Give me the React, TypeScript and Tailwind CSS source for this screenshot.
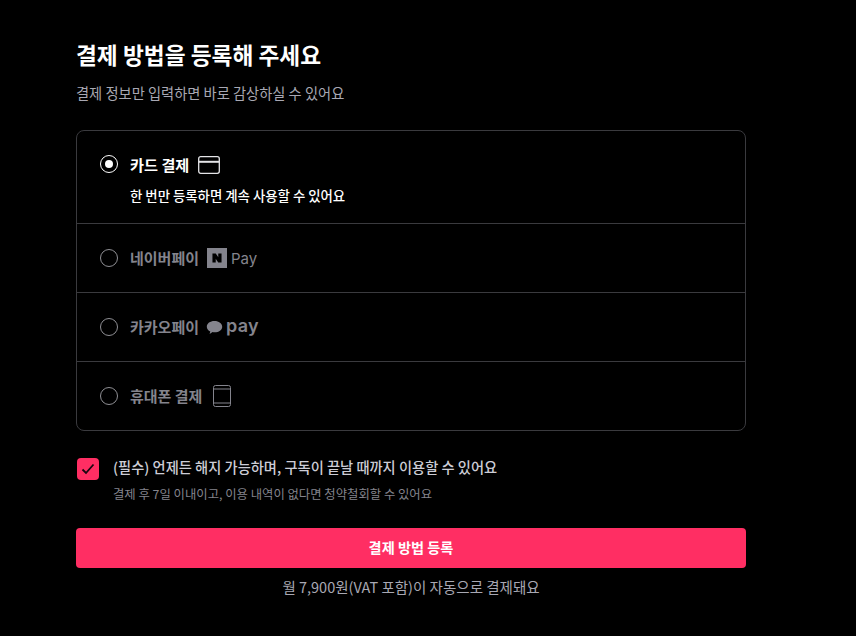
const font = { fontFamily: '"Noto Sans CJK KR", Inter, sans-serif' };

const Radio = ({ checked }: { checked?: boolean }) => (
  <span
    className={`flex h-[18px] w-[18px] shrink-0 items-center justify-center rounded-full border ${
      checked ? 'border-white' : 'border-[#8f8f94]'
    }`}
  >
    {checked && <span className="h-2 w-2 rounded-full bg-white" />}
  </span>
);

const CardIcon = () => (
  <svg width="22" height="18" viewBox="0 0 22 18" fill="none" stroke="#e4e4e7" strokeWidth="1.300">
    <rect x="0.700" y="0.700" width="20.600" height="16.600" rx="2" />
    <path d="M0.700 5.800h20.600" strokeWidth="2" />
  </svg>
);

const NaverPay = () => (
  <span className="flex items-center gap-1">
    <span className="flex h-5 w-5 items-center justify-center bg-[#84848d]">
      <svg width="10" height="10" viewBox="0 0 11 11" fill="#000">
        <path d="M0.500 0.500h3.600l2.800 4.200V0.500h3.600v10H6.900L4.100 6.300v4.200H0.500z" />
      </svg>
    </span>
    <span className="text-[15px] font-normal leading-none text-[#84848d]" style={{ fontFamily: 'Inter, sans-serif' }}>
      Pay
    </span>
  </span>
);

const KakaoPay = () => (
  <span className="-ml-px flex items-center gap-[3px]">
    <svg width="17" height="15" viewBox="0 0 17 15" fill="#84848d">
      <path d="M8.500 1C4.100 1 .8 3.400.8 6.700c0 2.100 1.400 3.900 3.500 4.900L3.600 14l3-1.900c.6.100 1.200.2 1.900.2 4.400 0 7.700-2.500 7.700-5.600S12.900 1 8.500 1z" />
    </svg>
    <span className="-mt-[2px] text-[18px] font-semibold leading-none tracking-[0.3px] text-[#84848d]" style={{ fontFamily: 'Inter, sans-serif' }}>
      pay
    </span>
  </span>
);

const PhoneIcon = () => (
  <svg width="18" height="22" viewBox="0 0 18 22" fill="none" stroke="#84848d" strokeWidth="1">
    <rect x="0.500" y="0.500" width="17" height="21" rx="2" />
    <path d="M0.500 4h17M0.500 18h17" />
  </svg>
);

const methods = [
  { label: '네이버페이', icon: <NaverPay />, gap: 'ml-2', height: 'h-[69px]' },
  { label: '카카오페이', icon: <KakaoPay />, gap: 'ml-2', height: 'h-[69px]' },
  { label: '휴대폰 결제', icon: <PhoneIcon />, gap: 'ml-[11px]', height: 'h-[68px]' },
];

export default function App() {
  return (
    <div className="min-h-[636px] overflow-hidden bg-black pt-[40px] pl-[76px] text-white" style={font}>
      <div className="w-[670px]">
        <h1 className="text-[22.700px] leading-[30px] font-bold">결제 방법을 등록해 주세요</h1>
        <p className="mt-[13px] text-[14.250px] leading-[20px] text-[#a8a8b3]">
          결제 정보만 입력하면 바로 감상하실 수 있어요
        </p>

        <div className="mt-[27px] rounded-lg border border-[#3a3a3e]">
          <div className="h-[93px] border-b border-[#3a3a3e] pl-[23px] pt-[21px]">
            <div className="flex h-6 items-center">
              <Radio checked />
              <span className="ml-3 text-[15.200px] font-bold">카드 결제</span>
              <span className="mt-px ml-[9px] flex">
                <CardIcon />
              </span>
            </div>
            <p className="mt-[9px] ml-[30px] text-[13.400px] leading-[20px] font-medium">
              한 번만 등록하면 계속 사용할 수 있어요
            </p>
          </div>
          {methods.map((m, i) => (
            <div
              key={m.label}
              className={`flex items-center pl-[23px] ${m.height} ${i < methods.length - 1 ? 'border-b border-[#3a3a3e]' : ''}`}
            >
              <Radio />
              <span className="ml-3 text-[15px] font-bold text-[#84848d]">{m.label}</span>
              <span className={`${m.gap} flex`}>{m.icon}</span>
            </div>
          ))}
        </div>

        <div className="mt-[27px] ml-px flex">
          <span className="flex h-[22px] w-[22px] shrink-0 items-center justify-center rounded bg-[#ff2e63]">
            <svg width="14" height="12" viewBox="0 0 14 12" fill="none" className="stroke-[#1a0610]" strokeWidth="1.800">
              <path d="M1.500 6.500l3.500 3.500 7.500-8.500" />
            </svg>
          </span>
          <div className="ml-[14px] -mt-[3px]">
            <p className="text-[14.250px] leading-[24px] font-medium text-[#cdcdd6]">
              (필수) 언제든 해지 가능하며, 구독이 끝날 때까지 이용할 수 있어요
            </p>
            <p className="mt-[6px] text-[12.350px] leading-[18px] text-[#84848d]">
              결제 후 7일 이내이고, 이용 내역이 없다면 청약철회할 수 있어요
            </p>
          </div>
        </div>

        <button className="mt-[25px] h-10 w-full rounded bg-[#ff2e63] text-[14.200px] font-bold text-white">
          결제 방법 등록
        </button>
        <p className="mt-[9px] text-center text-[14.500px] leading-[20px] text-[#a8a8b3]">
          월 7,900원(VAT 포함)이 자동으로 결제돼요
        </p>
      </div>
    </div>
  );
}
